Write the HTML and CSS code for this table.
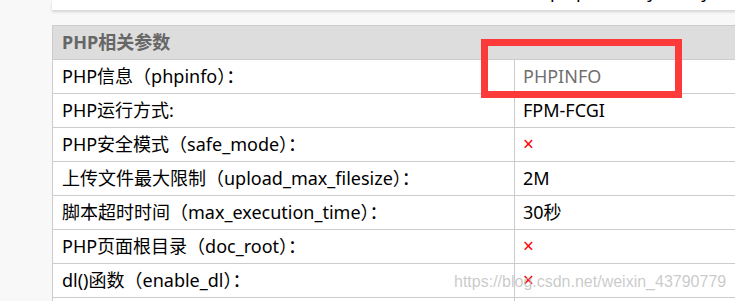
FILE: index.html
```html
<!DOCTYPE html>
<html lang="zh-CN">
<head>
    <meta charset="UTF-8">
    <meta name="viewport" content="width=device-width, initial-scale=1.0">
    <title>PHP相关参数</title>
    <link rel="stylesheet" href="styles.css">
</head>
<body>
    <!-- 上一块面板（只露出底边） -->
    <div class="panel-top">
        <div class="panel-top-text">
            <span class="tail t1">p</span><span class="tail t2">p</span><span class="tail t3">y</span><span class="tail t4">y</span>
        </div>
    </div>

    <!-- 参数表 -->
    <div class="param-table">
        <div class="param-head">PHP相关参数</div>
        <div class="param-row">
            <div class="param-name">PHP信息（phpinfo）：</div>
            <div class="param-value link">PHPINFO</div>
        </div>
        <div class="param-row">
            <div class="param-name">PHP运行方式:</div>
            <div class="param-value">FPM-FCGI</div>
        </div>
        <div class="param-row">
            <div class="param-name">PHP安全模式（safe_mode）：</div>
            <div class="param-value"><span class="no">×</span></div>
        </div>
        <div class="param-row">
            <div class="param-name">上传文件最大限制（upload_max_filesize）：</div>
            <div class="param-value">2M</div>
        </div>
        <div class="param-row">
            <div class="param-name">脚本超时时间（max_execution_time）：</div>
            <div class="param-value">30秒</div>
        </div>
        <div class="param-row">
            <div class="param-name">PHP页面根目录（doc_root）：</div>
            <div class="param-value"><span class="no">×</span></div>
        </div>
        <div class="param-row">
            <div class="param-name">dl()函数（enable_dl）：</div>
            <div class="param-value"><span class="no">×</span></div>
        </div>
        <div class="param-row">
            <div class="param-name">&nbsp;</div>
            <div class="param-value">&nbsp;</div>
        </div>
    </div>

    <!-- 标注框 -->
    <div class="mark-box"></div>

    <div class="watermark">https://blog.csdn.net/weixin_43790779</div>
</body>
</html>
```

FILE: styles.css
```css
html, body {
    overflow: hidden;
}
body {
    margin: 0;
    padding-left: 52px;
    background-color: #f8f8f8;
    font-family: "Noto Sans", "Noto Sans CJK SC", sans-serif;
    font-size: 18px;
    color: #000;
    position: relative;
    height: 301px;
}
.panel-top {
    height: 10px;
    width: 720px;
    background-color: #fff;
    box-shadow: 0 2px 3px rgba(0, 0, 0, 0.15);
    overflow: hidden;
    margin-bottom: 15px;
}
.panel-top-text {
    display: flex;
    margin-top: -24px;
    padding-left: 498px;
    line-height: 30px;
}
.t2 { margin-left: 15px; }
.t3 { margin-left: 60px; }
.t4 { margin-left: 45px; }
.param-table {
    width: 720px;
    background-color: #fff;
    border-top: 1px solid #ccc;
    border-left: 1px solid #ccc;
}
.param-head {
    height: 34px;
    box-sizing: border-box;
    border-bottom: 1px solid #ccc;
    background-color: #ddd;
    color: #666;
    font-weight: bold;
    padding-left: 9px;
    line-height: 33px;
}
.param-row {
    display: grid;
    grid-template-columns: 462px 1fr;
    height: 34px;
    box-sizing: border-box;
    border-bottom: 1px solid #ccc;
    line-height: 33px;
}
.param-name {
    border-right: 1px solid #ccc;
    padding-left: 9px;
    white-space: nowrap;
}
.param-value {
    padding-left: 8px;
}
.param-value.link {
    color: #707070;
}
.no {
    color: #f00;
    font-size: 19px;
}
/* 红色标注框 */
.mark-box {
    position: absolute;
    left: 481px;
    top: 39px;
    width: 201px;
    height: 59px;
    box-sizing: border-box;
    border: 7px solid #fc3a3a;
}
.watermark {
    position: absolute;
    left: 454px;
    top: 273px;
    font-family: "Liberation Sans", Arial, sans-serif;
    font-size: 16px;
    color: rgba(185, 185, 185, 0.75);
    white-space: nowrap;
}
```
